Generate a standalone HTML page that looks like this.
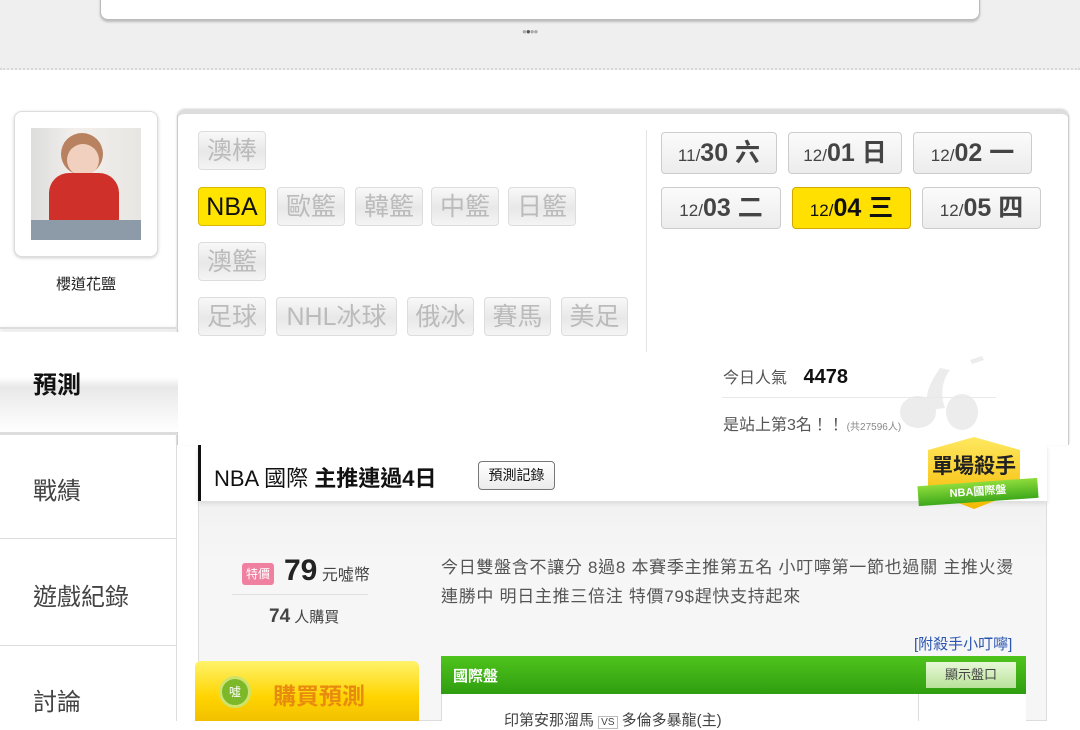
<!DOCTYPE html>
<html><head><meta charset="utf-8">
<style>
*{margin:0;padding:0;box-sizing:border-box}
body{width:1080px;height:721px;overflow:hidden;background:#fff;position:relative;font-family:"Liberation Sans","Noto Sans CJK TC",sans-serif;color:#333}
.a{position:absolute}
.top{left:0;top:0;width:1080px;height:70px;background:#efefef;border-bottom:2px dotted #d8d8d8}
.card{left:100px;top:-10px;width:880px;height:30px;background:#fff;border:1px solid #bbb;border-radius:0 0 8px 8px;box-shadow:0 2px 2px #bbb}
.tag{position:absolute;height:39px;border:1px solid #ddd;border-radius:4px;background:linear-gradient(#f8f8f8,#e8e8e8 55%,#f4f4f4);color:#bbb;font-size:25px;line-height:39px;text-align:center}
.tag.on{background:#ffe400;border-color:#d9b800;color:#111}
.dt{position:absolute;height:42px;border:1px solid #ccc;border-radius:4px;background:linear-gradient(#fbfbfb,#ececec);font-size:25px;line-height:40px;text-align:center;color:#444;font-weight:bold}
.dt small{font-size:17px;font-weight:normal}
.dt.on{background:#ffe000;border-color:#d0a800;color:#111}
.nav{left:0;width:178px;font-size:24px;color:#444;padding-left:33px}
</style></head><body>
<div class="a top"></div>
<div class="a card"></div>
<div class="a" style="left:522px;top:27px;width:30px;height:8px;color:#aaa;font-size:8px;letter-spacing:-1px">●<span style="color:#555">●</span>●●</div>

<div class="a" style="left:14px;top:111px;width:144px;height:146px;border:1px solid #ddd;border-radius:8px;box-shadow:0 1px 3px #ccc;background:#fff"></div>
<div class="a" style="left:31px;top:128px;width:110px;height:112px;background:linear-gradient(90deg,#ddd 0,#f2efec 40%,#e8e6e2 100%);overflow:hidden">
 <div class="a" style="left:30px;top:5px;width:42px;height:42px;border-radius:50%;background:#b88260"></div>
 <div class="a" style="left:36px;top:16px;width:32px;height:32px;border-radius:50%;background:#f1d0bf"></div>
 <div class="a" style="left:18px;top:45px;width:70px;height:50px;border-radius:20px 20px 4px 4px;background:#d0302a"></div>
 <div class="a" style="left:0;top:92px;width:110px;height:20px;background:#8d9aa8"></div>
</div>
<div class="a" style="left:0;top:273px;width:172px;text-align:center;font-size:15px;color:#222">櫻道花鹽</div>

<div class="a" style="left:177px;top:110px;width:892px;height:335px;border:1px solid #ccc;border-top:4px solid #ddd;border-bottom:none;border-radius:8px 8px 0 0;box-shadow:0 -1px 2px #ccc"></div>
<div class="a" style="left:0;top:327px;width:178px;height:2px;background:#ddd;box-shadow:0 2px 4px #ccc"></div>
<div class="a" style="left:0;top:332px;width:178px;height:100px;background:linear-gradient(#fff 0,#fff 45%,#e8e8e8 55%,#fff 100%)"></div>
<div class="a nav" style="top:365px;font-weight:bold;color:#111">預測</div>
<div class="a" style="left:0;top:432px;width:178px;height:3px;background:#ddd;border-radius:0 6px 0 0"></div>
<div class="a nav" style="top:471px">戰績</div>
<div class="a" style="left:0;top:538px;width:176px;height:1px;background:#ddd"></div>
<div class="a nav" style="top:577px">遊戲紀錄</div>
<div class="a" style="left:0;top:645px;width:176px;height:1px;background:#ddd"></div>
<div class="a nav" style="top:682px">討論</div>
<div class="a" style="left:176px;top:432px;width:1px;height:289px;background:#ddd"></div>

<div class="tag" style="left:198px;top:131px;width:68px">澳棒</div>
<div class="tag on" style="left:198px;top:187px;width:68px">NBA</div>
<div class="tag" style="left:277px;top:187px;width:68px">歐籃</div>
<div class="tag" style="left:355px;top:187px;width:68px">韓籃</div>
<div class="tag" style="left:431px;top:187px;width:68px">中籃</div>
<div class="tag" style="left:508px;top:187px;width:68px">日籃</div>
<div class="tag" style="left:198px;top:242px;width:68px">澳籃</div>
<div class="tag" style="left:198px;top:297px;width:68px">足球</div>
<div class="tag" style="left:276px;top:297px;width:121px">NHL冰球</div>
<div class="tag" style="left:407px;top:297px;width:67px">俄冰</div>
<div class="tag" style="left:484px;top:297px;width:67px">賽馬</div>
<div class="tag" style="left:561px;top:297px;width:67px">美足</div>
<div class="a" style="left:646px;top:130px;width:1px;height:222px;background:#e4e4e4"></div>

<div class="dt" style="left:661px;top:132px;width:116px"><small>11/</small>30 六</div>
<div class="dt" style="left:788px;top:132px;width:114px"><small>12/</small>01 日</div>
<div class="dt" style="left:913px;top:132px;width:119px"><small>12/</small>02 一</div>
<div class="dt" style="left:661px;top:187px;width:120px"><small>12/</small>03 二</div>
<div class="dt on" style="left:792px;top:187px;width:119px"><small>12/</small>04 三</div>
<div class="dt" style="left:922px;top:187px;width:119px"><small>12/</small>05 四</div>

<svg class="a" style="left:880px;top:350px" width="120" height="90"><g fill="#ececec"><path d="M60 18 C52 30 42 45 50 60 L65 58 C60 45 62 30 70 20Z"/><ellipse cx="38" cy="62" rx="18" ry="16"/><ellipse cx="82" cy="62" rx="16" ry="18"/><path d="M90 10l12-4 2 4-12 4z"/></g></svg>
<div class="a" style="left:723px;top:364px;font-size:16px;color:#555">今日人氣 <b style="font-size:20px;color:#111;margin-left:12px">4478</b></div>
<div class="a" style="left:722px;top:397px;width:274px;height:1px;background:#e8e8e8"></div>
<div class="a" style="left:723px;top:411px;font-size:16px;color:#555">是站上第3名！！<span style="font-size:10px;color:#888"> (共27596人)</span></div>

<div class="a" style="left:198px;top:445px;width:849px;height:276px;border:1px solid #ddd;background:linear-gradient(#eee 0,#f6f6f6 120px,#f6f6f6 100%)"></div>
<div class="a" style="left:198px;top:445px;width:849px;height:56px;background:#fff;border-left:3px solid #111;box-shadow:0 3px 4px #ddd"></div>
<div class="a" style="left:214px;top:461px;font-size:22px;color:#111">NBA 國際 <b>主推連過4日</b></div>
<div class="a" style="left:478px;top:461px;width:77px;height:29px;border:1px solid #777;border-radius:4px;background:linear-gradient(#fff,#ececec);font-size:14px;line-height:27px;text-align:center;color:#111">預測記錄</div>
<div class="a" style="left:928px;top:437px;width:92px;height:72px;background:linear-gradient(#ffe860,#f4b800);clip-path:polygon(50% 0,100% 18%,100% 75%,50% 100%,0 75%,0 18%)"></div>
<div class="a" style="left:924px;top:450px;width:100px;text-align:center;font-size:21px;font-weight:bold;color:#222">單場殺手</div>
<div class="a" style="left:918px;top:482px;width:120px;height:20px;background:linear-gradient(#8fdc3c,#3da81a);transform:rotate(-4deg);color:#fff;font-size:11px;font-weight:bold;text-align:center;line-height:20px">NBA國際盤</div>

<div class="a" style="left:242px;top:563px;width:32px;height:22px;background:#f080a0;border-radius:3px;color:#fff;font-size:12px;line-height:22px;text-align:center">特價</div>
<div class="a" style="left:284px;top:554px;font-size:30px;font-weight:bold;color:#222">79<span style="font-size:16px;font-weight:normal;color:#444"> 元噓幣</span></div>
<div class="a" style="left:232px;top:594px;width:136px;height:1px;background:#e0e0e0"></div>
<div class="a" style="left:269px;top:606px;font-size:19px;font-weight:bold;color:#444">74<span style="font-size:15px;font-weight:normal"> 人購買</span></div>
<div class="a" style="left:441px;top:553px;width:600px;font-size:17px;line-height:29px;color:#555;letter-spacing:0.7px">今日雙盤含不讓分 8過8 本賽季主推第五名 小叮嚀第一節也過關 主推火燙<br>連勝中 明日主推三倍注 特價79$趕快支持起來</div>
<div class="a" style="left:914px;top:633px;font-size:15px;color:#2a55b0">[附殺手小叮嚀]</div>

<div class="a" style="left:195px;top:661px;width:224px;height:60px;background:linear-gradient(#fff36a,#ffd400 60%,#f2c000);border-radius:6px 6px 0 0"></div>
<div class="a" style="left:219px;top:676px;width:32px;height:32px;border-radius:50%;background:#7cb82a;border:3px solid #cde36b;color:#fff;font-size:12px;text-align:center;line-height:26px">噓</div>
<div class="a" style="left:273px;top:677px;font-size:23px;font-weight:bold;color:#e88a10">購買預測</div>

<div class="a" style="left:441px;top:656px;width:585px;height:38px;background:linear-gradient(#4fc41c,#2f9e10)"></div>
<div class="a" style="left:453px;top:665px;font-size:15px;color:#fff;font-weight:bold">國際盤</div>
<div class="a" style="left:926px;top:662px;width:90px;height:26px;background:linear-gradient(#e8f8d8,#b8e29a);font-size:13px;line-height:26px;text-align:center;color:#444">顯示盤口</div>
<div class="a" style="left:441px;top:694px;width:585px;height:27px;background:#fff;border-left:1px solid #ddd"></div>
<div class="a" style="left:918px;top:694px;width:1px;height:27px;background:#ddd"></div>
<div class="a" style="left:504px;top:709px;font-size:15px;color:#444">印第安那溜馬 <span style="border:1px solid #bbb;font-size:10px;padding:0 2px">VS</span> 多倫多暴龍(主)</div>
</body></html>
